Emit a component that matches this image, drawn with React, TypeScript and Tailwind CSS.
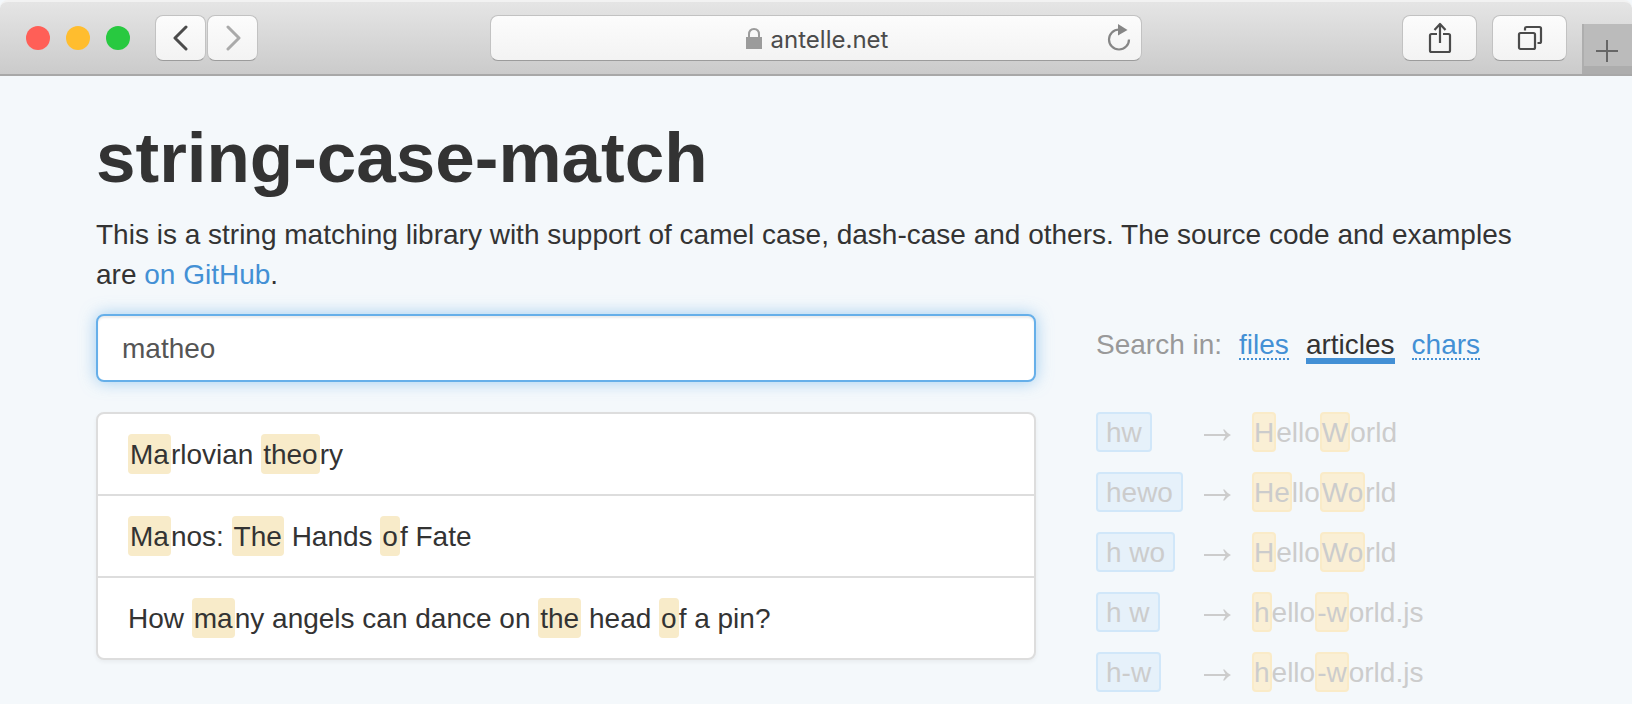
import { Fragment } from "react";

type Part = string | [string];

const articles: Part[][] = [
  [["Ma"], "rlovian ", ["theo"], "ry"],
  [["Ma"], "nos: ", ["The"], " Hands ", ["o"], "f Fate"],
  ["How ", ["ma"], "ny angels can dance on ", ["the"], " head ", ["o"], "f a pin?"],
];

const examples: { query: string; result: Part[] }[] = [
  { query: "hw", result: [["H"], "ello", ["W"], "orld"] },
  { query: "hewo", result: [["He"], "llo", ["Wo"], "rld"] },
  { query: "h wo", result: [["H"], "ello", ["Wo"], "rld"] },
  { query: "h w", result: [["h"], "ello", ["-w"], "orld.js"] },
  { query: "h-w", result: [["h"], "ello", ["-w"], "orld.js"] },
];

function Parts({ parts, markClass }: { parts: Part[]; markClass: string }) {
  return (
    <>
      {parts.map((part, i) =>
        typeof part === "string" ? (
          <Fragment key={i}>{part}</Fragment>
        ) : (
          <mark key={i} className={markClass}>
            {part[0]}
          </mark>
        )
      )}
    </>
  );
}

const toolButton =
  "flex h-[46px] items-center justify-center rounded-lg border border-[#c2c2c2] border-b-[#9c9c9c] bg-linear-to-b from-[#fcfcfc] to-[#f3f3f3]";

function Toolbar() {
  return (
    <header className="flex h-[76px] items-center rounded-t-lg border-t-2 border-b-2 border-t-[#f2f2f2] border-b-[#a8a8a8] bg-linear-to-b from-[#e5e5e5] to-[#cbcbcb]">
      <div className="flex flex-1 items-center">
        <div className="ml-[26px] flex gap-4">
          <button aria-label="Close" className="size-6 rounded-full bg-[#ff5f57]" />
          <button aria-label="Minimize" className="size-6 rounded-full bg-[#ffbd2e]" />
          <button aria-label="Zoom" className="size-6 rounded-full bg-[#28c940]" />
        </div>
        <div className="ml-[25px] flex gap-px">
          <button aria-label="Back" className={`${toolButton} w-[51px]`}>
            <svg width="16" height="26" viewBox="0 0 16 26" fill="none" stroke="#4b4b4b" strokeWidth="3" strokeLinecap="round" strokeLinejoin="round">
              <path d="M13 2L2 13L13 24" />
            </svg>
          </button>
          <button aria-label="Forward" className={`${toolButton} w-[51px]`}>
            <svg width="16" height="26" viewBox="0 0 16 26" fill="none" stroke="#aaaaaa" strokeWidth="3" strokeLinecap="round" strokeLinejoin="round">
              <path d="M3 2L14 13L3 24" />
            </svg>
          </button>
        </div>
      </div>

      <div className="flex h-[46px] w-2/5 items-center rounded-lg border border-[#c2c2c2] border-b-[#9c9c9c] bg-linear-to-b from-[#fcfcfc] to-[#f3f3f3] pr-2.5 pl-9">
        <div className="flex flex-1 items-center justify-center gap-[9px]">
          <svg width="16" height="21" viewBox="0 0 16 21">
            <rect y="9" width="16" height="12" fill="#9b9b9b" />
            <path d="M3 10V6.500C3 3 5 1 8 1S13 3 13 6.500V10" fill="none" stroke="#9b9b9b" strokeWidth="2" />
          </svg>
          <span className="pt-1 font-[Inter,sans-serif] text-[24px] leading-8 text-[#4b4b4b]">antelle.net</span>
        </div>
        <button aria-label="Reload">
          <svg width="24" height="28" viewBox="0 0 24 28">
            <path d="M12 5.500A10 10 0 1 0 22 15.500" fill="none" stroke="#868686" strokeWidth="2.200" />
            <path d="M11 0L20.500 6L11 11.500Z" fill="#868686" />
          </svg>
        </button>
      </div>

      <div className="flex flex-1 items-center justify-end self-stretch">
        <button aria-label="Share" className={`${toolButton} mr-[15px] w-[75px]`}>
          <svg width="24" height="32" viewBox="0 0 24 32" fill="none" stroke="#4b4b4b" strokeWidth="2.200" strokeLinejoin="round">
            <path d="M9 12H3.500Q2 12 2 13.500V28.500Q2 30 3.500 30H20.500Q22 30 22 28.500V13.500Q22 12 20.500 12H15M12 21V2M6.500 8L12 2L17.500 8" />
          </svg>
        </button>
        <button aria-label="Tabs" className={`${toolButton} mr-[15px] w-[75px]`}>
          <svg width="26" height="26" viewBox="0 0 26 26" fill="none" stroke="#4b4b4b" strokeWidth="2.200">
            <rect x="2" y="8" width="16" height="16" rx="1.500" />
            <path d="M8 5.500V3.500Q8 2 9.500 2H22.500Q24 2 24 3.500V16.500Q24 18 22.500 18H20.500" />
          </svg>
        </button>
        <button aria-label="New tab" className="flex h-[50px] w-[50px] items-center justify-center self-end border-b-8 border-l-2 border-b-[#adadad] border-l-[#aeaeae] bg-[#bbbbbb] pt-3 pr-0.5">
          <svg width="22" height="22" viewBox="0 0 22 22" fill="none" stroke="#666666" strokeWidth="2">
            <path d="M11 0V22M0 11H22" />
          </svg>
        </button>
      </div>
    </header>
  );
}

export default function App() {
  return (
    <div className="min-h-screen bg-[#f4f8fb] font-['Liberation_Sans',Arial,sans-serif] text-[28px] leading-10 text-[#333333]">
      <Toolbar />
      <main className="px-24 pt-[42px]">
        <h1 className="text-[71px] leading-[80px] font-bold">string-case-match</h1>
        <p className="mt-[17px]">
          This is a string matching library with support of camel case, dash-case and others. The source code and
          examples are{" "}
          <a href="#github" className="text-[#4390d5]">
            on GitHub
          </a>
          .
        </p>

        <div className="mt-[19px] grid grid-cols-[47fr_22fr] gap-x-[60px]">
          <div>
            <input
              aria-label="Search"
              defaultValue="matheo"
              className="block h-[68px] w-full rounded-lg border-2 border-[#66afe9] bg-white px-6 pt-0.5 text-[#555555] shadow-[inset_0_2px_2px_rgba(0,0,0,0.075),0_0_16px_rgba(102,175,233,0.6)] outline-none"
            />
            <ul className="mt-[30px] rounded-lg border-2 border-[#dddddd] bg-white shadow-[0_2px_4px_rgba(0,0,0,0.05)]">
              {articles.map((parts, i) => (
                <li key={i} className="border-[#dddddd] px-[30px] pt-5 pb-[19px] not-first:border-t-2">
                  <Parts parts={parts} markClass="inline-block rounded bg-[#f8ebc9] px-0.5 pt-0.5 leading-[38px] text-inherit" />
                </li>
              ))}
            </ul>
          </div>

          <div>
            <nav className="flex h-[68px] items-center gap-[17px] pb-1 whitespace-nowrap text-[#999999]">
              <span className="pb-0.5">Search in:</span>
              <a href="#files" className="border-b-2 border-dotted border-[#4390d5] leading-[26px] text-[#4390d5]">
                files
              </a>
              <a href="#articles" aria-current="page" className="mt-1 border-b-6 border-[#4390d5] leading-[26px] text-[#333333]">
                articles
              </a>
              <a href="#chars" className="border-b-2 border-dotted border-[#4390d5] leading-[26px] text-[#4390d5]">
                chars
              </a>
            </nav>
            <table className="mt-[30px] text-left whitespace-nowrap text-[#cccccc]">
              <tbody>
                {examples.map(({ query, result }) => (
                  <tr key={query} className="align-top">
                    <td className="w-[108px]">
                      <code className="block w-fit rounded border-2 border-[#d1e7f9] bg-[#e6f1fa] px-2 pt-0.5 font-[Liberation_Sans,Arial,sans-serif] leading-[34px]">
                        {query}
                      </code>
                    </td>
                    <td className="w-12 pt-[17px]">
                      <svg role="img" aria-label="matches" width="27" height="12" viewBox="0 0 27 12">
                        <path d="M0 6H24" stroke="#cccccc" strokeWidth="2" />
                        <path d="M19 0.500H20.500Q23 4 27 6Q23 8 20.500 11.500H19Q20.500 8.500 22 6Q20.500 3.500 19 0.500Z" fill="#cccccc" />
                      </svg>
                    </td>
                    <td className="pb-[19px]">
                      <Parts
                        parts={result}
                        markClass="inline-block rounded border-2 border-[#faebc8] bg-[#faefd5] pt-0.5 leading-[34px] text-inherit"
                      />
                    </td>
                  </tr>
                ))}
              </tbody>
            </table>
          </div>
        </div>
      </main>
    </div>
  );
}
